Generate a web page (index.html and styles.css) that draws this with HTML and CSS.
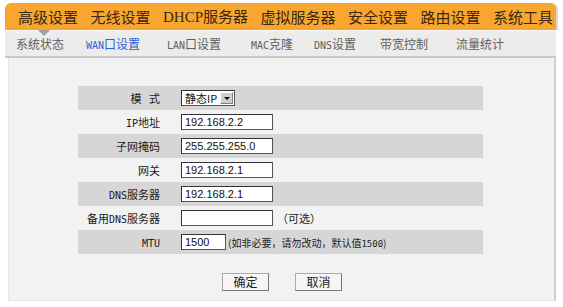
FILE: index.html
```html
<!DOCTYPE html>
<html lang="zh-CN">
<head>
  <meta charset="UTF-8">
  <title>WAN口设置</title>
  <link rel="stylesheet" href="styles.css">
</head>
<body>
  <div class="page">
    <!-- main menu -->
    <div class="main-nav">
      <span class="main-item active">高级设置</span>
      <span class="main-item">无线设置</span>
      <span class="main-item"><span class="serif">DHCP</span>服务器</span>
      <span class="main-item">虚拟服务器</span>
      <span class="main-item">安全设置</span>
      <span class="main-item">路由设置</span>
      <span class="main-item">系统工具</span>
    </div>

    <!-- sub menu -->
    <div class="sub-nav">
      <span class="sub-item">系统状态</span>
      <span class="sub-item current"><span class="lat">WAN</span>口设置</span>
      <span class="sub-item"><span class="lat">LAN</span>口设置</span>
      <span class="sub-item"><span class="lat">MAC</span>克隆</span>
      <span class="sub-item"><span class="lat">DNS</span>设置</span>
      <span class="sub-item">带宽控制</span>
      <span class="sub-item">流量统计</span>
    </div>

    <div class="content">
      <div class="form">
        <div class="row dark">
          <div class="label">模&nbsp;&nbsp;&nbsp;式</div>
          <div class="field">
            <div class="select">
              <span class="select-text">静态IP</span>
              <span class="select-btn"><span class="arrow"></span></span>
            </div>
          </div>
        </div>
        <div class="row">
          <div class="label"><span class="lat">IP</span>地址</div>
          <div class="field"><input class="text" type="text" value="192.168.2.2"></div>
        </div>
        <div class="row dark">
          <div class="label">子网掩码</div>
          <div class="field"><input class="text" type="text" value="255.255.255.0"></div>
        </div>
        <div class="row">
          <div class="label">网关</div>
          <div class="field"><input class="text" type="text" value="192.168.2.1"></div>
        </div>
        <div class="row dark">
          <div class="label"><span class="lat">DNS</span>服务器</div>
          <div class="field"><input class="text" type="text" value="192.168.2.1"></div>
        </div>
        <div class="row">
          <div class="label">备用<span class="lat">DNS</span>服务器</div>
          <div class="field"><input class="text" type="text" value=""><span class="note">（可选）</span></div>
        </div>
        <div class="row dark">
          <div class="label"><span class="lat">MTU</span></div>
          <div class="field"><input class="text short" type="text" value="1500"><span class="note tight">(如非必要，请勿改动，默认值<span class="lat">1500</span>)</span></div>
        </div>
      </div>

      <div class="buttons">
        <button class="btn">确定</button>
        <button class="btn">取消</button>
      </div>
    </div>
  </div>
</body>
</html>
```

FILE: styles.css
```css
body {
  margin: 0;
  background-color: #ffffff;
  font-family: "Noto Sans CJK SC", "DejaVu Sans", sans-serif;
  color: #222;
}

.page {
  width: 551px;
  margin: 3px 0 0 5px;
}

/* Main menu */
.main-nav {
  height: 27px;
  background-color: #f8a630;
  border-radius: 6px 6px 0 0;
  box-shadow: 2px 0 1px #d8d8d8;
  display: flex;
  align-items: center;
  justify-content: space-between;
  padding: 0 3px 0 13px;
  position: relative;
}

.main-item {
  font-size: 15px;
  line-height: 27px;
  color: #3a2810;
  white-space: nowrap;
}

.serif {
  font-family: "Liberation Serif", serif;
  font-size: 15px;
}

.main-item.active::after {
  content: "";
  position: absolute;
  left: 33px;
  top: 27px;
  border-left: 6px solid transparent;
  border-right: 6px solid transparent;
  border-top: 6px solid #a0a0a0;
}

/* Sub menu */
.sub-nav {
  height: 25px;
  margin-top: 1px;
  background-color: #ececec;
  border-bottom: 2px solid #c8c8c8;
  display: flex;
  align-items: center;
  padding-left: 11px;
}

.sub-item {
  font-size: 12px;
  color: #606060;
  white-space: nowrap;
}

.sub-item:nth-child(1) { width: 70px; }
.sub-item:nth-child(2) { width: 81px; }
.sub-item:nth-child(3) { width: 84px; }
.sub-item:nth-child(4) { width: 63px; }
.sub-item:nth-child(5) { width: 66px; }
.sub-item:nth-child(6) { width: 76px; }

.sub-item.current {
  color: #2f5fd0;
}

.lat {
  font-family: "DejaVu Sans Mono", monospace;
  font-size: 10px;
  letter-spacing: 0;
}

/* Content */
.content {
  margin: 0 0 0 3px;
  height: 243px;
  background-color: #f2f2f2;
  border-left: 1px solid #e6e6e6;
  border-right: 2px solid #d0d0d0;
  border-bottom: 1px solid #e6e6e6;
  box-sizing: border-box;
  padding: 28px 0 0 69px;
}

.form {
  width: 405px;
}

.row {
  height: 24px;
  display: flex;
  align-items: center;
}

.row.dark {
  background-color: #d6d6d6;
}

.label {
  width: 82px;
  padding-right: 21px;
  text-align: right;
  font-size: 11px;
  color: #1a1a1a;
}

.field {
  display: flex;
  align-items: center;
}

.text {
  width: 92px;
  height: 16px;
  box-sizing: border-box;
  margin: 0;
  padding: 0 3px;
  border: 1px solid #555;
  border-top-color: #333;
  border-left-color: #333;
  background-color: #fff;
  font-family: "Liberation Sans", Arial, sans-serif;
  font-size: 11px;
  color: #111;
}

.text.short {
  width: 45px;
}

.note {
  font-size: 11px;
  color: #222;
  margin-left: 4px;
}

.note.tight {
  margin-left: 2px;
  font-size: 10px;
}

.note .lat {
  font-size: 9px;
}

/* Drop-down */
.select {
  width: 54px;
  height: 16px;
  box-sizing: border-box;
  border: 1px solid #555;
  border-top-color: #333;
  border-left-color: #333;
  background-color: #fff;
  display: flex;
  align-items: center;
  justify-content: space-between;
}

.select-text {
  font-size: 11px;
  padding-left: 3px;
  color: #111;
}

.select-btn {
  width: 13px;
  height: 12px;
  margin-right: 1px;
  background-color: #d4d0c8;
  border: 1px solid #fff;
  border-right-color: #808080;
  border-bottom-color: #808080;
  box-sizing: border-box;
  display: flex;
  align-items: center;
  justify-content: center;
}

.arrow {
  border-left: 3px solid transparent;
  border-right: 3px solid transparent;
  border-top: 3px solid #000;
}

/* Buttons */
.buttons {
  display: flex;
  gap: 26px;
  margin: 19px 0 0 144px;
}

.btn {
  width: 47px;
  height: 18px;
  padding: 0;
  background-color: #f6f6f6;
  border: 1px solid #aaa;
  border-right-color: #777;
  border-bottom-color: #777;
  font-family: "Noto Sans CJK SC", sans-serif;
  font-size: 12px;
  line-height: 16px;
  color: #222;
}
```
